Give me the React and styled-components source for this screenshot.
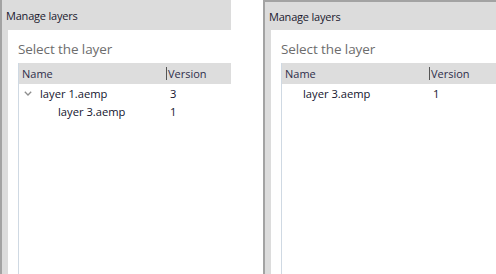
import styled, { createGlobalStyle } from 'styled-components'

const GlobalStyle = createGlobalStyle`
    html, body {
        margin: 0;
        padding: 0;
        background: #ffffff;
    }
    body {
        font-family: "Open Sans", "Noto Sans", sans-serif;
    }
`

const Page = styled.div`
    display: flex;
    gap: 32px;
    width: 496px;
    height: 274px;
    overflow: hidden;
`

const Window = styled.div`
    display: flex;
    flex-direction: column;
    width: ${props => props.width}px;
    height: 274px;
    background: #dcdcdc;
    border-left: 2px solid #a3a3a3;
    border-top: ${props => props.framed ? '2px solid #a3a3a3' : 'none'};
    box-sizing: border-box;
    flex-shrink: 0;
`

const TitleBar = styled.div`
    height: ${props => props.framed ? 28 : 30}px;
    display: flex;
    align-items: center;
    padding-left: 4px;
    padding-top: 1px;
    box-sizing: border-box;
    font-size: 11px;
    color: #1a1a2e;
    letter-spacing: -0.2px;
`

const Body = styled.div`
    flex: 1;
    margin-left: 6px;
    background: #ffffff;
    padding: 10px 0 0 10px;
    display: flex;
    flex-direction: column;
`

const Heading = styled.div`
    font-size: 13.5px;
    color: #6d6d6d;
    height: 23px;
    letter-spacing: -0.1px;
`

const Tree = styled.div`
    flex: 1;
    border-left: 1px solid #cfd9e3;
    display: flex;
    flex-direction: column;
`

const Header = styled.div`
    display: grid;
    grid-template-columns: 146px 1fr;
    height: 21px;
    align-items: center;
    background: #dddddd;
    font-size: 11px;
    color: #2e2e4a;
`

const HeaderCell = styled.div`
    padding-left: ${props => props.sep ? 1 : 3}px;
    display: flex;
    align-items: center;
    gap: 1px;
`

const Divider = styled.span`
    width: 1px;
    height: 13px;
    background: #555555;
`

const Row = styled.div`
    display: grid;
    grid-template-columns: 148px 1fr;
    height: 18px;
    align-items: center;
    font-size: 11.2px;
    color: #14142e;
    &:first-of-type {
        margin-top: 1px;
    }
`

const NameCell = styled.div`
    display: flex;
    align-items: center;
    padding-left: ${props => 5 + props.depth * 18}px;
`

const Toggle = styled.span`
    width: 16px;
    display: flex;
    align-items: center;
    color: #8a8a8a;
`

const VersionCell = styled.div`
    padding-left: 3px;
`

const Chevron = () =>
    <svg width="8" height="5" viewBox="0 0 8 5">
        <path d="M0.8 0.8 L4 4 L7.2 0.8" fill="none" stroke="#8d8d8d" strokeWidth="1.3" />
    </svg>

const LayerTable = ({rows}) =>
    <Tree>
        <Header>
            <HeaderCell>Name</HeaderCell>
            <HeaderCell sep><Divider />Version</HeaderCell>
        </Header>
        {rows.map(row =>
            <Row key={row.name}>
                <NameCell depth={row.depth}>
                    <Toggle>{row.open && <Chevron />}</Toggle>
                    {row.name}
                </NameCell>
                <VersionCell>{row.version}</VersionCell>
            </Row>
        )}
    </Tree>

const LayerWindow = ({width, framed, rows}) =>
    <Window width={width} framed={framed}>
        <TitleBar framed={framed}>Manage layers</TitleBar>
        <Body>
            <Heading>Select the layer</Heading>
            <LayerTable rows={rows} />
        </Body>
    </Window>

const leftRows = [
    {name: 'layer 1.aemp', version: 3, depth: 0, open: true},
    {name: 'layer 3.aemp', version: 1, depth: 1},
]

const rightRows = [
    {name: 'layer 3.aemp', version: 1, depth: 0},
]

export default function App() {
    return (
        <>
            <GlobalStyle />
            <Page>
                <LayerWindow width={231} rows={leftRows} />
                <LayerWindow width={233} framed rows={rightRows} />
            </Page>
        </>
    )
}
